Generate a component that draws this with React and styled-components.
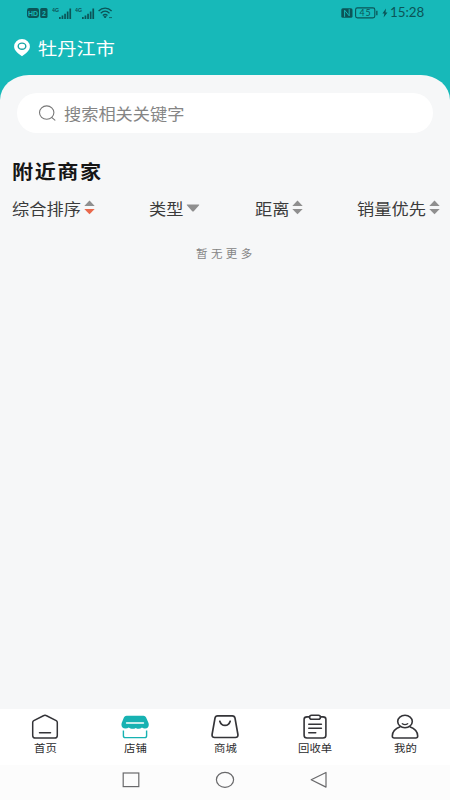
import { useState } from "react";
import styled, { createGlobalStyle } from "styled-components";

const GlobalStyle = createGlobalStyle`
  * {
    box-sizing: border-box;
  }
  body {
    margin: 0;
    background: #17b9b9;
    font-family: "Noto Sans CJK SC", "Noto Sans", sans-serif;
  }
`;

const Screen = styled.div`
  display: flex;
  flex-direction: column;
  width: 450px;
  height: 800px;
  overflow: hidden;
  background: #17b9b9;
`;

const Wide = styled.span`
  display: block;
  flex: none;
  width: ${(p) => p.$width / p.$scale}px;
  margin-right: ${(p) => p.$width - p.$width / p.$scale}px;
  white-space: nowrap;
  transform: scaleX(${(p) => p.$scale});
  transform-origin: left center;
`;

const StatusBar = styled.div`
  display: flex;
  justify-content: space-between;
  height: 25px;
  padding: 0 27px;
  color: #0b5457;
`;

const StatusGroup = styled.div`
  display: flex;
  align-items: center;
  gap: ${(p) => p.$gap || 0}px;
  height: 25px;
`;

const Clock = styled.div`
  font-family: Lato, sans-serif;
  font-size: 12.5px;
  line-height: 25px;
`;

const Location = styled.div`
  display: flex;
  align-items: center;
  gap: 8px;
  height: 50px;
  padding: 0 14px 4px;
  color: #fff;
  font-size: 17px;
  line-height: 24px;
`;

const Panel = styled.main`
  flex: 1;
  padding: 18px 10px 0 12px;
  background: #f6f7f8;
  border-radius: 29px 29px 0 0 / 25px 25px 0 0;
`;

const SearchBox = styled.div`
  display: flex;
  align-items: center;
  gap: 8px;
  height: 40px;
  margin: 0 7px 0 5px;
  padding-left: 21px;
  background: #fff;
  border-radius: 20px;
  color: #858585;
  font-size: 15.5px;
  line-height: 24px;
`;

const Title = styled.h1`
  margin: 23px 0 0;
  color: #161616;
  font-size: 19px;
  font-weight: 700;
  line-height: 30px;
  letter-spacing: 1.4px;
`;

const Filters = styled.div`
  display: flex;
  justify-content: space-between;
  margin-top: 10px;
`;

const Filter = styled.button`
  display: flex;
  align-items: center;
  gap: 3px;
  height: 24px;
  padding: 0;
  border: none;
  background: none;
  color: #3b3b3b;
  font: 400 15.5px / 24px "Noto Sans CJK SC", sans-serif;
`;

const Empty = styled.div`
  margin: 23px 0 0 184px;
  color: #858585;
  font-size: 11.5px;
  line-height: 20px;
  letter-spacing: 3.4px;
`;

const TabBar = styled.nav`
  display: grid;
  grid-template-columns: repeat(5, 1fr);
  height: 56px;
  background: #fff;
`;

const Tab = styled.button`
  display: flex;
  flex-direction: column;
  align-items: center;
  padding: 5px 0 0;
  border: none;
  background: none;
  color: #2b2b2d;
  font: 400 10px / 14px "Noto Sans CJK SC", sans-serif;

  svg {
    flex: none;
    margin-bottom: 1px;
  }
`;

const SystemNav = styled.div`
  display: flex;
  align-items: center;
  justify-content: center;
  gap: 74px;
  height: 35px;
  padding-bottom: 6px;
  background: #fcfcfc;
`;

const Signal = () => (
  <svg width="20" height="15" viewBox="0 0 20 15" fill="currentColor">
    <text x="0" y="6.8" fontSize="6" fontWeight="700" fontFamily="Liberation Sans" textLength="7" lengthAdjust="spacingAndGlyphs">
      4G
    </text>
    <path d="M7 12h1.700v2H7zM9.600 10.500h1.700V14H9.600zM12.200 8.700h1.700V14h-1.700zM14.800 6.500h1.700V14h-1.700zM17.400 3.500h1.700V14h-1.700z" />
  </svg>
);

const HdIcon = () => (
  <svg width="22" height="10" viewBox="0 0 22 10">
    <rect width="12" height="10" rx="2.4" fill="currentColor" />
    <rect x="13.2" width="7.3" height="10" rx="1.5" fill="currentColor" />
    <g fill="#17b9b9" fontFamily="Liberation Sans" fontWeight="700" fontSize="7">
      <text x="1" y="7.6">HD</text>
      <text x="15" y="7.6">2</text>
    </g>
  </svg>
);

const WifiIcon = () => (
  <svg width="15" height="12" viewBox="0 0 15 12" fill="none" stroke="currentColor" strokeWidth="1.3">
    <path d="M.6 4C4.2.2 10 .2 13.6 4M2.7 6.3c2.7-2.6 6.1-2.6 8.8 0M4.8 8.5c1.5-1.3 3.2-1.3 4.7 0" />
    <path d="M5.900 9.600h2.400L7.100 11zM11 10.600h3" fill="currentColor" strokeWidth=".8" />
  </svg>
);

const NfcIcon = () => (
  <svg width="12" height="10" viewBox="0 0 12 10">
    <rect x=".3" y=".2" width="11.200" height="9.600" rx="1.600" fill="currentColor" />
    <path d="M3.600 8.800V2.200l4.600 5.600V1.200" stroke="#17b9b9" strokeWidth="1" fill="none" />
  </svg>
);

const BatteryIcon = () => (
  <svg width="24" height="12" viewBox="0 0 24 12">
    <rect x=".6" y=".9" width="19.2" height="10" rx="1.8" fill="none" stroke="currentColor" strokeWidth="1.1" />
    <path d="M21.2 3.7h1.3v4.6h-1.3z" fill="currentColor" />
    <text x="4.6" y="9" fontSize="8.8" fontFamily="Lato" fill="currentColor" textLength="11">
      45
    </text>
  </svg>
);

const BoltIcon = () => (
  <svg width="6" height="10" viewBox="0 0 6 10">
    <path d="M4 .5.4 5.400h2L1.600 9.500 5.500 4.400h-2z" fill="currentColor" />
  </svg>
);

const PinIcon = () => (
  <svg width="16" height="18" viewBox="0 0 16 18">
    <path
      d="M8 0a7.9 7.6 0 0 1 7.9 7.6c0 4.2-4.500 7.300-7.900 9.700C4.600 14.900.1 11.800.1 7.600A7.900 7.600 0 0 1 8 0z"
      fill="#fff"
    />
    <ellipse cx="8" cy="7.200" rx="3.800" ry="3.100" fill="none" stroke="#17a5a5" strokeWidth="1.400" />
  </svg>
);

const SearchIcon = () => (
  <svg width="18" height="16" viewBox="0 0 18 16" fill="none" stroke="#777" strokeWidth="1.1">
    <ellipse cx="8.700" cy="7.600" rx="7.200" ry="6.700" />
    <path d="m13.600 12.400 3.300 2.700" strokeLinecap="round" />
  </svg>
);

const SortArrows = ({ down = "#8f8f8f" }) => (
  <svg width="11" height="16" viewBox="0 0 11 16">
    <path d="M5.500.6 10.700 6H.300z" fill="#8f8f8f" />
    <path d="M5.500 14.200.300 9h10.400z" fill={down} />
  </svg>
);

const DropArrow = () => (
  <svg width="14" height="14" viewBox="0 0 14 14">
    <path d="M1.300 3.500h11.400q1 0 .4.700L8 9.900q-1 1-2 0L.9 4.200q-.6-.7.4-.7z" fill="#8f8f8f" />
  </svg>
);

const HomeIcon = () => (
  <svg width="28" height="26" viewBox="0 0 28 26" fill="none" stroke="#343438" strokeWidth="1.500">
    <path d="M12.900 1.500 2.800 6.700q-1.100.6-1.100 1.800v13q0 2.600 2.800 2.600h19q2.800 0 2.800-2.600v-13q0-1.200-1.100-1.800L15.100 1.500q-1.100-.6-2.200 0z" />
    <path d="M8.500 18.800h11" strokeLinecap="round" />
  </svg>
);

const ShopIcon = () => (
  <svg width="28" height="26" viewBox="0 0 28 26">
    <path
      d="M5.500 1.800h17q1.800 0 2.600 1.700l2.300 5.200c1.100 3.200-.2 5.900-3.200 5.900-1.300 0-2.200-.3-3.200-1-1.800 1.500-4.400 1.500-6.200.3-1.800 1.300-5.200 1.300-7-.3-1 .7-2 1-3.300 1-3.300 0-4.800-2.700-3.700-5.900l2.100-5.200q.8-1.700 2.600-1.700z"
      fill="#17b2b2"
    />
    <path d="M5.500 9h17" stroke="#fff" strokeWidth="1.400" strokeLinecap="round" />
    <path d="M2.400 16.500v5.200q0 1.900 2 1.900h19.200q2 0 2-1.900v-5.200" fill="none" stroke="#17b2b2" strokeWidth="1.400" />
  </svg>
);

const BagIcon = () => (
  <svg width="28" height="26" viewBox="0 0 28 26" fill="none" stroke="#343438" strokeWidth="1.700">
    <path d="M6.700 1.900h14.600q2.300 0 2.700 2.200l2.900 16.300q.4 3.100-2.600 3.100H3.700q-3 0-2.600-3.100L4 4.100q.4-2.200 2.700-2.200z" />
    <path d="M8.800 7.200c1.800 5.600 8.600 5.600 10.400 0" strokeLinecap="round" />
  </svg>
);

const OrderIcon = () => (
  <svg width="28" height="26" viewBox="0 0 28 26" fill="none" stroke="#343438" strokeWidth="1.600">
    <path d="M8.500 2.900H6Q3.100 2.900 3.100 5.300v16Q3.100 24 6 24h16q2.900 0 2.900-2.700v-16q0-2.400-2.900-2.400h-2.500" />
    <rect x="8.600" y="1.200" width="10.800" height="4" rx="2" />
    <path d="M7.800 10.300h12.600M7.800 14.300h12.600M7.800 18.700h6.900" strokeLinecap="round" />
  </svg>
);

const UserIcon = () => (
  <svg width="28" height="26" viewBox="0 0 28 26" fill="none" stroke="#343438" strokeWidth="1.600">
    <ellipse cx="14" cy="7.500" rx="7.300" ry="6.200" />
    <path d="M9.300 12.700C4.200 14.500 1.300 17.500 1.300 22q0 2 1.900 2h21.600q1.900 0 1.900-2c0-4.500-2.900-7.500-8-9.300" />
    <path d="M11.300 9.700q2.700 1.900 5.400 0" strokeWidth="1.300" strokeLinecap="round" />
  </svg>
);

const filters = [
  { name: "综合排序", width: 69, icon: <SortArrows down="#e9694c" /> },
  { name: "类型", width: 34.5, icon: <DropArrow /> },
  { name: "距离", width: 34.5, icon: <SortArrows /> },
  { name: "销量优先", width: 69, icon: <SortArrows /> },
];

const tabs = [
  { name: "首页", icon: <HomeIcon /> },
  { name: "店铺", icon: <ShopIcon /> },
  { name: "商城", icon: <BagIcon /> },
  { name: "回收单", icon: <OrderIcon /> },
  { name: "我的", icon: <UserIcon /> },
];

const App = () => {
  const [active, setActive] = useState("店铺");

  return (
    <Screen>
      <GlobalStyle />
      <StatusBar>
        <StatusGroup $gap={3}>
          <HdIcon />
          <Signal />
          <Signal />
          <WifiIcon />
        </StatusGroup>
        <StatusGroup $gap={2.5}>
          <NfcIcon />
          <BatteryIcon />
          <BoltIcon />
          <Clock>
            <Wide $width={33} $scale={1.07}>15:28</Wide>
          </Clock>
        </StatusGroup>
      </StatusBar>
      <Location>
        <PinIcon />
        <Wide $width={77} $scale={1.13}>牡丹江市</Wide>
      </Location>
      <Panel>
        <SearchBox>
          <SearchIcon />
          <Wide $width={120} $scale={1.11}>搜索相关关键字</Wide>
        </SearchBox>
        <Title>
          <Wide $width={91} $scale={1.11}>附近商家</Wide>
        </Title>
        <Filters>
          {filters.map((filter) => (
            <Filter key={filter.name}>
              <Wide $width={filter.width} $scale={1.11}>{filter.name}</Wide>
              {filter.icon}
            </Filter>
          ))}
        </Filters>
        <Empty>暂无更多</Empty>
      </Panel>
      <TabBar>
        {tabs.map((tab) => (
          <Tab
            key={tab.name}
            aria-current={tab.name === active ? "page" : undefined}
            onClick={() => setActive(tab.name)}
          >
            {tab.icon}
            <Wide $width={tab.name.length * 11.4} $scale={1.14}>{tab.name}</Wide>
          </Tab>
        ))}
      </TabBar>
      <SystemNav>
        <svg width="20" height="20" viewBox="0 0 20 20" fill="none" stroke="#69696b" strokeWidth="1.200">
          <rect x="2.200" y="3" width="15.600" height="13.600" />
        </svg>
        <svg width="20" height="20" viewBox="0 0 20 20" fill="none" stroke="#69696b" strokeWidth="1.200">
          <ellipse cx="10" cy="9.800" rx="8.600" ry="7.500" />
        </svg>
        <svg width="20" height="20" viewBox="0 0 20 20" fill="none" stroke="#69696b" strokeWidth="1.200">
          <path d="M17 2.500v14.600L2.200 9.800z" strokeLinejoin="round" />
        </svg>
      </SystemNav>
    </Screen>
  );
};

export default App;
